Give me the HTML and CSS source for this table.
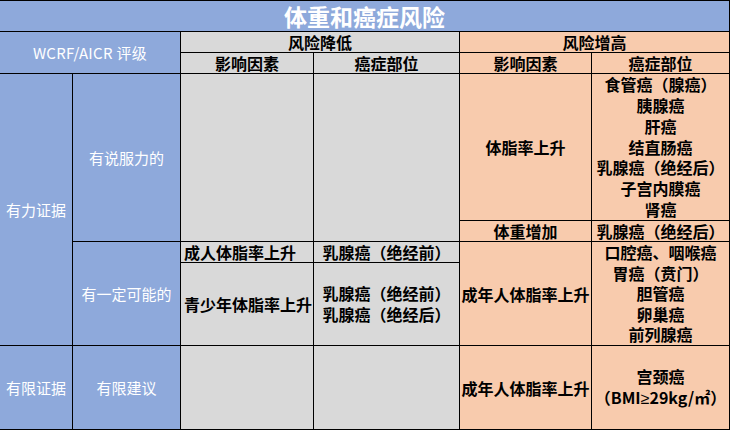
FILE: index.html
```html
<!DOCTYPE html>
<html lang="zh-CN">
<head>
<meta charset="utf-8">
<title>体重和癌症风险</title>
<link rel="stylesheet" href="styles.css">
</head>
<body>
<div class="sheet">
  <div class="cell blue title">体重和癌症风险</div>

  <div class="cell blue wcrf">WCRF/AICR 评级</div>
  <div class="cell grey hd lower">风险降低</div>
  <div class="cell orange hd higher">风险增高</div>

  <div class="cell grey hd c3 r3">影响因素</div>
  <div class="cell grey hd c4 r3">癌症部位</div>
  <div class="cell orange hd c5 r3">影响因素</div>
  <div class="cell orange hd c6 r3">癌症部位</div>

  <div class="cell blue wt strong-ev">有力证据</div>
  <div class="cell blue wt convincing">有说服力的</div>
  <div class="cell grey c3 rAB"></div>
  <div class="cell grey c4 rAB"></div>
  <div class="cell orange bk c5 rA">体脂率上升</div>
  <div class="cell orange bk c6 rA list">
    <span>食管癌（腺癌）</span>
    <span>胰腺癌</span>
    <span>肝癌</span>
    <span>结直肠癌</span>
    <span>乳腺癌（绝经后）</span>
    <span>子宫内膜癌</span>
    <span>肾癌</span>
  </div>
  <div class="cell orange bk c5 rB">体重增加</div>
  <div class="cell orange bk c6 rB">乳腺癌（绝经后）</div>

  <div class="cell blue wt c2 rCD">有一定可能的</div>
  <div class="cell grey bk left c3 rC">成人体脂率上升</div>
  <div class="cell grey bk c4 rC">乳腺癌（绝经前）</div>
  <div class="cell grey bk left c3 rD">青少年体脂率上升</div>
  <div class="cell grey bk c4 rD list">
    <span>乳腺癌（绝经前）</span>
    <span>乳腺癌（绝经后）</span>
  </div>
  <div class="cell orange bk c5 rCD">成年人体脂率上升</div>
  <div class="cell orange bk c6 rCD list tight">
    <span>口腔癌、咽喉癌</span>
    <span>胃癌（贲门）</span>
    <span>胆管癌</span>
    <span>卵巢癌</span>
    <span>前列腺癌</span>
  </div>

  <div class="cell blue wt c1 rE">有限证据</div>
  <div class="cell blue wt c2 rE">有限建议</div>
  <div class="cell grey c3 rE"></div>
  <div class="cell grey c4 rE"></div>
  <div class="cell orange bk c5 rE">成年人体脂率上升</div>
  <div class="cell orange bk c6 rE list">
    <span>宫颈癌</span>
    <span>（BMI<span class="sym">≥</span>29kg/㎡）</span>
  </div>
</div>
</body>
</html>
```

FILE: styles.css
```css
html, body {
  margin: 0;
  padding: 0;
  background: #ffffff;
}

body {
  font-family: "Noto Sans CJK SC", "Noto Sans", sans-serif;
  font-size: 16px;
  color: #000000;
}

.sheet {
  display: grid;
  grid-template-columns: 72px 107px 132px 145px 131px 137px;
  grid-template-rows: 30px 20px 20px 146px 20px 20px 82px 83px;
  gap: 1px;
  padding: 1px 1px 1px 0;
  width: 730px;
  box-sizing: border-box;
  background: #000000;
}

.cell {
  display: flex;
  flex-direction: column;
  align-items: center;
  justify-content: center;
  text-align: center;
  white-space: nowrap;
  line-height: 20px;
}

.blue { background: #8ea9db; color: #ffffff; }
.grey { background: #d9d9d9; }
.orange { background: #f8cbad; }

.title {
  grid-column: 1 / -1;
  grid-row: 1;
  font-size: 23px;
  font-weight: 700;
  line-height: 30px;
}

.wcrf {
  grid-column: 1 / 3;
  grid-row: 2 / 4;
  font-size: 15px;
  letter-spacing: 0.3px;
}

.hd { font-weight: 700; font-size: 16px; }
.lower { grid-column: 3 / 5; grid-row: 2; }
.higher { grid-column: 5 / 7; grid-row: 2; }

.wt { font-size: 15px; }
.bk { font-weight: 700; font-size: 16px; }

.left {
  align-items: flex-start;
  padding-left: 3px;
}

.list { line-height: 20.8px; }
.list.tight { line-height: 20.6px; }
.list > span { display: block; }

.sym {
  font-family: "Liberation Sans", sans-serif;
  font-weight: 400;
}

.c1 { grid-column: 1; }
.c2 { grid-column: 2; }
.c3 { grid-column: 3; }
.c4 { grid-column: 4; }
.c5 { grid-column: 5; }
.c6 { grid-column: 6; }

.r3 { grid-row: 3; }
.rA { grid-row: 4; }
.rB { grid-row: 5; }
.rAB { grid-row: 4 / 6; }
.rC { grid-row: 6; }
.rD { grid-row: 7; }
.rCD { grid-row: 6 / 8; }
.rE { grid-row: 8; }

.strong-ev { grid-column: 1; grid-row: 4 / 8; }
.convincing { grid-column: 2; grid-row: 4 / 6; }
```
